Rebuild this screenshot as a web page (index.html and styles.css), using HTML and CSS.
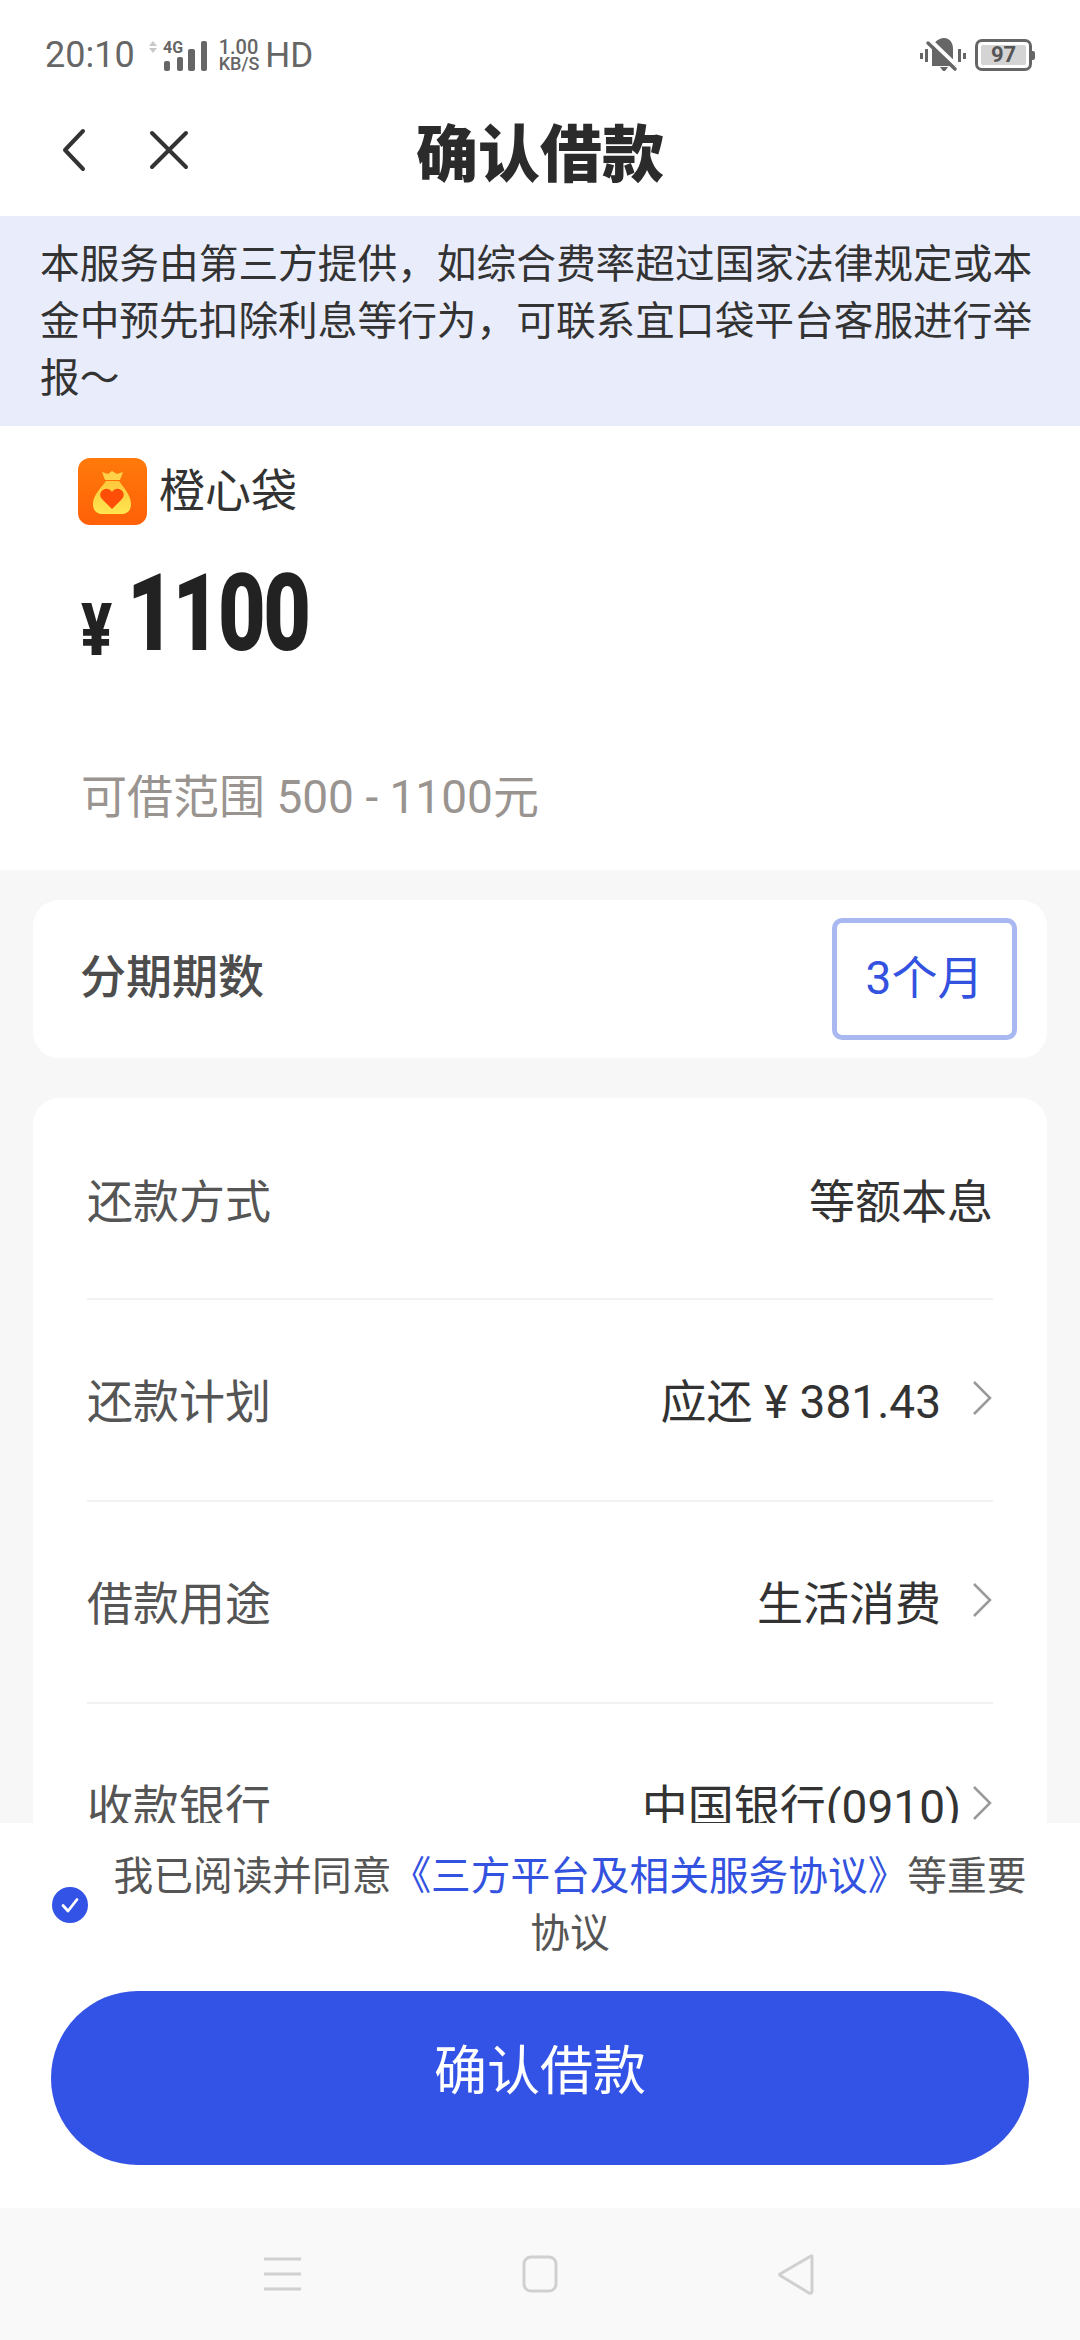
FILE: index.html
```html
<!DOCTYPE html>
<html lang="zh">
<head>
  <meta charset="UTF-8" />
  <meta name="viewport" content="width=device-width, initial-scale=1.0" />
  <title>确认借款</title>
  <link rel="stylesheet" href="styles.css">
</head>
<body>
  <div class="page">
    <div class="status-bar">
      <div class="status-left">
        <span class="time">20:10</span>
        <svg class="signal" width="64" height="38" viewBox="0 -4 64 38">
          <path d="M3 6 L7 1 L11 6 Z M3 8 L11 8 L7 13 Z" fill="#c8c8c8"/>
          <text x="17" y="13" class="signal-text">4G</text>
          <rect x="18" y="21" width="6" height="10" rx="2" fill="#666"/>
          <rect x="31" y="17" width="6" height="14" rx="2" fill="#666"/>
          <rect x="42" y="9" width="7" height="22" rx="2" fill="#666"/>
          <rect x="55" y="1" width="6" height="30" rx="2" fill="#666"/>
        </svg>
        <span class="speed"><span>1.00</span><span>KB/S</span></span>
        <span class="hd">HD</span>
      </div>
      <div class="status-right">
        <svg width="46" height="34" viewBox="0 0 46 34">
          <path d="M0 15h3v6H0zM5 11h3v13H5zM38 11h3v13h-3zM43 15h3v6h-3z" fill="#666"/>
          <path d="M24 0c6 0 9 5 9 11v12l3 5H12V11c1-6 6-11 12-11z" fill="#666"/>
          <path d="M20 29h8l-3 4h-2z" fill="#666"/>
          <path d="M9 1l27 26" stroke="#fff" stroke-width="4"/>
          <path d="M8 5l27 26" stroke="#666" stroke-width="3.5" stroke-linecap="round"/>
        </svg>
        <div class="battery"><span class="battery-level">97</span></div>
        <span class="battery-tip"></span>
      </div>
    </div>

    <div class="nav-bar">
      <div class="nav-icons">
        <svg width="28" height="44" viewBox="0 0 28 44"><path d="M23 3 L5 22 L23 41" fill="none" stroke="#333" stroke-width="4" stroke-linecap="round" stroke-linejoin="round"/></svg>
        <svg width="42" height="42" viewBox="0 0 42 42"><path d="M4 4 L38 38 M38 4 L4 38" fill="none" stroke="#333" stroke-width="4" stroke-linecap="round"/></svg>
      </div>
      <h1 class="nav-title">确认借款</h1>
    </div>

    <div class="notice">本服务由第三方提供，如综合费率超过国家法律规定或本金中预先扣除利息等行为，可联系宜口袋平台客服进行举报～</div>

    <div class="amount-panel">
      <div class="brand">
        <svg class="brand-logo" width="69" height="67" viewBox="0 0 69 67">
          <defs>
            <linearGradient id="bgGrad" x1="0" y1="0" x2="0" y2="1"><stop offset="0" stop-color="#ff7a0a"/><stop offset="1" stop-color="#ff6008"/></linearGradient>
            <linearGradient id="bagGrad" x1="0" y1="0" x2="0" y2="1"><stop offset="0" stop-color="#ffc83c"/><stop offset="1" stop-color="#ffe650"/></linearGradient>
          </defs>
          <rect width="69" height="67" rx="12" fill="url(#bgGrad)"/>
          <path d="M24 14l6 2 4-3 5 3 6-2-3 8H27z" fill="#ffd24a"/>
          <path d="M28 23h13c3 5 12 13 12 23 0 7-4 10-10 10H25c-6 0-10-3-10-10 0-10 10-18 13-23z" fill="url(#bagGrad)"/>
          <path d="M34 51L24 41c-6-7 5-15 10-7 5-8 16 0 10 7z" fill="#ff4e08"/>
        </svg>
        <span class="brand-name">橙心袋</span>
      </div>
      <div class="amount"><span class="currency">¥</span><span class="amount-value">1100</span></div>
      <div class="range">可借范围 500 - 1100元</div>
    </div>

    <div class="content">
      <div class="card term-card">
        <span class="term-label">分期期数</span>
        <span class="term-btn">3个月</span>
      </div>
      <div class="card detail-card">
        <div class="row">
          <span class="row-label">还款方式</span>
          <span class="row-value">等额本息</span>
        </div>
        <div class="row">
          <span class="row-label">还款计划</span>
          <span class="row-value">应还 ¥ 381.43<svg class="chevron" width="22" height="36" viewBox="0 0 22 36"><path d="M3 2 L19 18 L3 34" fill="none" stroke="#999" stroke-width="2.5"/></svg></span>
        </div>
        <div class="row">
          <span class="row-label">借款用途</span>
          <span class="row-value">生活消费<svg class="chevron" width="22" height="36" viewBox="0 0 22 36"><path d="M3 2 L19 18 L3 34" fill="none" stroke="#999" stroke-width="2.5"/></svg></span>
        </div>
        <div class="row">
          <span class="row-label">收款银行</span>
          <span class="row-value">中国银行(0910)<svg class="chevron chevron-tight" width="22" height="36" viewBox="0 0 22 36"><path d="M3 2 L19 18 L3 34" fill="none" stroke="#999" stroke-width="2.5"/></svg></span>
        </div>
      </div>
    </div>

    <div class="footer-panel">
      <div class="agree">
        <svg class="check" width="36" height="36" viewBox="0 0 36 36">
          <circle cx="18" cy="18" r="18" fill="#3352e6"/>
          <path d="M11 18.5 L16 24 L25 12.5" fill="none" stroke="#fff" stroke-width="2.8" stroke-linecap="round" stroke-linejoin="round"/>
        </svg>
        <p class="agree-text">我已阅读并同意<a class="agree-link">《三方平台及相关服务协议》</a>等重要协议</p>
      </div>
      <div class="submit">确认借款</div>
    </div>

    <div class="sys-nav">
      <svg width="38" height="36" viewBox="0 0 38 36"><path d="M0 3h37M0 18h37M0 33h37" stroke="#d0d0d0" stroke-width="3"/></svg>
      <svg width="36" height="38" viewBox="0 0 36 38"><rect x="2" y="2" width="32" height="34" rx="7" fill="none" stroke="#d0d0d0" stroke-width="3"/></svg>
      <svg width="38" height="42" viewBox="0 0 38 42"><path d="M34 3 L3 21 Q2 22 4 23 L32 40 Q35 41 35 38 V5 Q35 2 34 3 Z" fill="none" stroke="#d0d0d0" stroke-width="3" stroke-linejoin="round"/></svg>
    </div>
  </div>
</body>
</html>
```

FILE: styles.css
```css
* {
  box-sizing: border-box;
}
body {
  margin: 0;
  background: #fff;
  font-family: Roboto, "Noto Sans CJK SC", sans-serif;
}
.page {
  display: flex;
  flex-direction: column;
  width: 1080px;
  height: 2340px;
  overflow: hidden;
}

/* status bar */
.status-bar {
  display: flex;
  justify-content: space-between;
  align-items: center;
  height: 110px;
  padding: 0 45px;
  color: #666;
  flex: none;
}
.status-left, .status-right {
  display: flex;
  align-items: center;
}
.time {
  font-size: 36px;
}
.signal {
  margin-left: 11px;
}
.signal-text {
  font-size: 16px;
  font-weight: 700;
  fill: #666;
}
.speed {
  display: flex;
  flex-direction: column;
  margin-left: 9px;
  font-size: 18px;
  font-weight: 500;
  line-height: 15px;
}
.speed span:first-child {
  font-size: 20px;
  line-height: 17px;
}
.hd {
  margin-left: 6px;
  font-size: 35px;
}
.status-right svg {
  margin-right: 9px;
}
.battery {
  width: 57px;
  height: 32px;
  padding: 3px;
  border: 3px solid #666;
  border-radius: 7px;
}
.battery-level {
  display: block;
  height: 20px;
  background: #d4d4d4;
  border-radius: 2px;
  color: #555;
  font-size: 22px;
  font-weight: 700;
  line-height: 20px;
  text-align: center;
}
.battery-tip {
  width: 3px;
  height: 9px;
  background: #666;
  border-radius: 0 2px 2px 0;
}

/* title */
.nav-bar {
  display: flex;
  align-items: center;
  justify-content: center;
  position: relative;
  height: 106px;
  padding-bottom: 26px;
  flex: none;
}
.nav-icons {
  display: flex;
  align-items: center;
  gap: 60px;
  position: absolute;
  left: 60px;
  top: 18px;
}
.nav-title {
  margin: 0;
  color: #2b2b2b;
  font-size: 62px;
  font-weight: 900;
}

.notice {
  height: 210px;
  padding: 20px 40px 0;
  background: #e9edfb;
  color: #333;
  font-size: 39.7px;
  line-height: 57px;
  flex: none;
}

.amount-panel {
  height: 444px;
  padding: 32px 78px 0;
  flex: none;
}
.brand {
  display: flex;
  align-items: center;
  gap: 12px;
  height: 67px;
}
.brand-name {
  margin-bottom: 10px;
  color: #333;
  font-size: 46px;
}
.amount {
  display: flex;
  align-items: baseline;
  height: 132px;
  margin-top: 26px;
  color: #222;
}
.currency {
  display: inline-block;
  margin-left: 3px;
  font-size: 72px;
  font-weight: 900;
  transform: scaleX(.8) translateY(5px);
  transform-origin: left;
}
.amount-value {
  display: inline-block;
  margin-left: 7px;
  font-size: 107px;
  font-weight: 900;
  letter-spacing: -3px;
  transform: scaleX(.77);
  transform-origin: left;
}
.range {
  margin: 77px 0 0 3px;
  color: #999490;
  font-size: 46px;
}

.content {
  flex: 1;
  min-height: 0;
  padding: 30px 33px 0;
  background: #f7f7f7;
  overflow: hidden;
}
.card {
  background: #fff;
  border-radius: 26px;
}
.term-card {
  display: flex;
  justify-content: space-between;
  align-items: center;
  height: 158px;
  padding: 0 30px 0 47px;
}
.term-label {
  margin-bottom: 12px;
  color: #4d4d4d;
  font-size: 46px;
  font-weight: 500;
}
.term-btn {
  width: 185px;
  height: 122px;
  border: 5px solid #aab8f2;
  border-radius: 10px;
  color: #3352e0;
  font-size: 46px;
  line-height: 110px;
  text-align: center;
}
.detail-card {
  margin-top: 40px;
  padding: 0 54px;
}
.row {
  display: flex;
  justify-content: space-between;
  align-items: center;
  height: 202px;
  border-bottom: 2px solid #f2f2f2;
  font-size: 46px;
}
.row + .row {
  padding-bottom: 4px;
}
.row:last-child {
  border-bottom: none;
}
.row-label {
  color: #555;
}
.row-value {
  display: flex;
  align-items: center;
  color: #333;
}
.chevron {
  margin-left: 30px;
}
.chevron-tight {
  margin-left: 10px;
}

/* bottom panel */
.footer-panel {
  height: 385px;
  padding-top: 25px;
  background: #fff;
  flex: none;
}
.agree {
  display: flex;
  align-items: center;
  padding: 0 50px 0 52px;
}
.check {
  flex: none;
}
.agree-text {
  margin: 0;
  padding-left: 22px;
  color: #555;
  font-size: 39.7px;
  line-height: 57px;
  text-align: center;
}
.agree-link {
  color: #3352e0;
}
.submit {
  width: 978px;
  height: 174px;
  margin: 29px 0 0 51px;
  background: #3352e6;
  border-radius: 87px;
  color: #fff;
  font-size: 53px;
  line-height: 162px;
  text-align: center;
}

.sys-nav {
  display: flex;
  justify-content: space-between;
  align-items: center;
  height: 132px;
  padding: 0 265px 0 264px;
  background: #f9f9f9;
  flex: none;
}
```
